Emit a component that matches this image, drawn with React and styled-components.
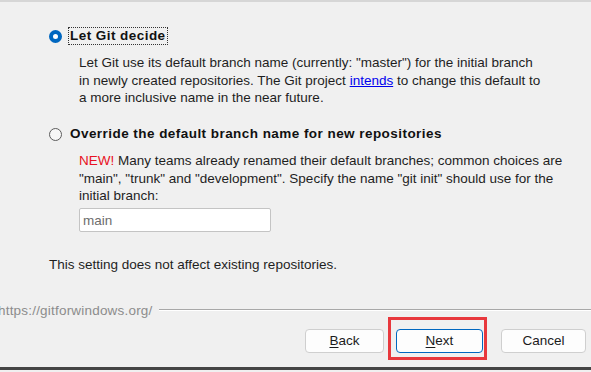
import React from 'react';
import styled, { createGlobalStyle } from 'styled-components';

const GlobalStyle = createGlobalStyle`
  html, body {
    margin: 0;
    padding: 0;
    background: #f0f0f0;
  }
  body {
    font-family: "Liberation Sans", Arial, sans-serif;
    font-size: 13.5px;
    color: #1a1a1a;
  }
`;

const Page = styled.div`
  width: 591px;
  height: 372px;
  box-sizing: border-box;
  background: #f0f0f0;
  border-top: 2px solid #d6d6d6;
  display: flex;
  flex-direction: column;
  overflow: hidden;
`;

const Content = styled.div`
  padding-left: 49px;
  display: flex;
  flex-direction: column;
  align-items: flex-start;
`;

const OptionRow = styled.label`
  display: flex;
  align-items: center;
  height: 18px;
  gap: 6px;
  margin-top: ${(p) => p.$top}px;
  cursor: default;
`;

const Radio = styled.span`
  width: 13px;
  height: 13px;
  box-sizing: border-box;
  border-radius: 50%;
  flex: none;
  border: ${(p) => (p.$checked ? '4px solid #0067c0' : '1px solid #5c5c5c')};
  background: ${(p) => (p.$checked ? '#ffffff' : '#f7f7f7')};
`;

const OptionLabel = styled.span`
  font-weight: bold;
  font-size: 13.5px;
  letter-spacing: 0.45px;
  line-height: 16px;
  padding: 0 1px;
  color: #111;
  border: 1px ${(p) => (p.$focused ? 'dotted #333' : 'solid transparent')};
`;

const Description = styled.p`
  margin: ${(p) => p.$top}px 0 0 30px;
  line-height: 17.5px;
  color: #1e1e1e;
`;

const Link = styled.a`
  color: #0000ee;
  text-decoration: underline;
`;

const NewTag = styled.span`
  color: #e81123;
`;

const BranchInput = styled.input`
  margin: 3.5px 0 0 30px;
  width: 192px;
  height: 24px;
  box-sizing: border-box;
  border: 1px solid #c4c4c4;
  border-radius: 2px;
  background: #ffffff;
  padding: 0 3px;
  font-family: inherit;
  font-size: 13.5px;
  color: #6d6d6d;
  outline: none;
`;

const Note = styled.p`
  margin: 23.5px 0 0;
  line-height: 17.5px;
  color: #1e1e1e;
`;

const GroupRow = styled.div`
  display: flex;
  align-items: center;
  height: 16px;
  margin-top: 29px;
  margin-left: -2px;
  gap: 6px;
`;

const GroupLabel = styled.span`
  color: #8c8c8c;
  letter-spacing: 0.2px;
  white-space: nowrap;
`;

const GroupLine = styled.span`
  flex: 1;
  height: 0;
  border-top: 1px solid #a8a8a8;
  border-bottom: 1px solid #ffffff;
`;

const ButtonRow = styled.div`
  display: flex;
  justify-content: flex-end;
  align-items: center;
  margin-top: 10.5px;
  padding-right: 5px;
`;

const Button = styled.button`
  position: relative;
  width: ${(p) => p.$width}px;
  height: 24px;
  margin-left: ${(p) => p.$gap}px;
  box-sizing: border-box;
  border: 1px solid ${(p) => (p.$primary ? '#0067c0' : '#cfcfcf')};
  border-radius: 4px;
  background: #fdfdfd;
  font-family: inherit;
  font-size: 13.5px;
  color: #1b1b1b;
  padding: 0;

  u {
    text-decoration-thickness: 1px;
    text-underline-offset: 2px;
  }
`;

const Highlight = styled.span`
  position: absolute;
  left: -9px;
  top: -13px;
  right: -5px;
  bottom: -8px;
  border: 3px solid #e8383d;
  pointer-events: none;
`;

const BottomEdge = styled.div`
  margin-top: auto;
  height: 2px;
  border-top: 3px solid #454545;
  background: #f0f0f0;
`;

export default function App() {
  return (
    <>
      <GlobalStyle />
      <Page>
        <Content>
          <OptionRow $top={25}>
            <Radio $checked />
            <OptionLabel $focused>Let Git decide</OptionLabel>
          </OptionRow>
          <Description $top={9}>
            Let Git use its default branch name (currently: "master") for the initial branch
            <br />
            in newly created repositories. The Git project <Link href="#">intends</Link> to change this default to
            <br />
            a more inclusive name in the near future.
          </Description>

          <OptionRow $top={18.5}>
            <Radio />
            <OptionLabel>Override the default branch name for new repositories</OptionLabel>
          </OptionRow>
          <Description $top={9}>
            <NewTag>NEW!</NewTag> Many teams already renamed their default branches; common choices are
            <br />
            "main", "trunk" and "development". Specify the name "git init" should use for the
            <br />
            initial branch:
          </Description>
          <BranchInput defaultValue="main" />

          <Note>This setting does not affect existing repositories.</Note>
        </Content>

        <GroupRow>
          <GroupLabel>https://gitforwindows.org/</GroupLabel>
          <GroupLine />
        </GroupRow>

        <ButtonRow>
          <Button $width={79} $gap={0}>
            <u>B</u>ack
          </Button>
          <Button $width={87} $gap={12} $primary>
            <u>N</u>ext
            <Highlight />
          </Button>
          <Button $width={85} $gap={18}>
            Cancel
          </Button>
        </ButtonRow>

        <BottomEdge />
      </Page>
    </>
  );
}
